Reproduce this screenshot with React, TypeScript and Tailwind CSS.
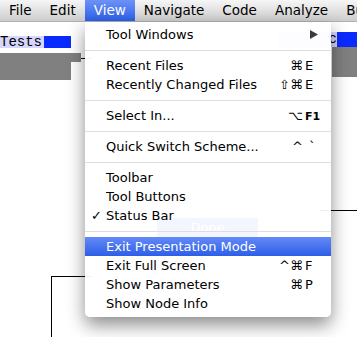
import type { ReactNode } from 'react';

const MENUBAR = ['File', 'Edit', 'View', 'Navigate', 'Code', 'Analyze', 'Build'];

type Item =
  | { kind: 'sep' }
  | {
      kind: 'item';
      label: string;
      mods?: ReactNode;
      keyChar?: ReactNode;
      submenu?: boolean;
      checked?: boolean;
      active?: boolean;
    };

const ITEMS: Item[] = [
  { kind: 'item', label: 'Tool Windows', submenu: true },
  { kind: 'sep' },
  { kind: 'item', label: 'Recent Files', mods: '⌘', keyChar: 'E' },
  { kind: 'item', label: 'Recently Changed Files', mods: '⇧⌘', keyChar: 'E' },
  { kind: 'sep' },
  {
    kind: 'item',
    label: 'Select In...',
    mods: '⌥',
    keyChar: <span className="text-[11px] font-bold">F1</span>,
  },
  { kind: 'sep' },
  { kind: 'item', label: 'Quick Switch Scheme...', mods: '^', keyChar: <span className="pl-[4px]">`</span> },
  { kind: 'sep' },
  { kind: 'item', label: 'Toolbar' },
  { kind: 'item', label: 'Tool Buttons' },
  { kind: 'item', label: 'Status Bar', checked: true },
  { kind: 'sep' },
  { kind: 'item', label: 'Exit Presentation Mode', active: true },
  { kind: 'item', label: 'Exit Full Screen', mods: '^⌘', keyChar: 'F' },
  { kind: 'item', label: 'Show Parameters', mods: '⌘', keyChar: 'P' },
  { kind: 'item', label: 'Show Node Info' },
];

function MenuBar() {
  return (
    <header className="flex h-[22px] shrink-0 items-stretch overflow-hidden whitespace-nowrap border-b border-[#b0b0b0] bg-gradient-to-b from-[#f6f6f6] to-[#cdcdcd] text-[13.5px] text-black">
      {MENUBAR.map((name) => (
        <span
          key={name}
          className={
            name === 'View'
              ? 'flex items-center bg-gradient-to-b from-[#6d92f7] to-[#2c5fe9] px-[9px] text-white'
              : 'flex items-center px-[9px]'
          }
        >
          {name}
        </span>
      ))}
    </header>
  );
}

/** The diagram nodes and wires sitting on the canvas behind the menu. */
function Canvas() {
  return (
    <div className="relative flex-1 bg-white">
      {/* left node */}
      <div className="absolute left-0 top-[14px] flex h-[12px] font-['Liberation_Mono',monospace] text-[14px] leading-[12px] text-black">
        <span className="w-[44px] bg-[#d6d6ff]">Tests</span>
        <span className="w-[27px] bg-[#0a2bff]" />
      </div>
      <div className="absolute left-0 top-[31px] h-[27px] w-[71px] bg-[#808080]" />
      <div className="absolute left-[71px] top-[31px] h-[9px] w-[10px] bg-[#808080]" />
      <div className="absolute left-[81px] top-[36px] h-px w-[10px] bg-black" />

      {/* right node, mostly under the menu */}
      <div className="absolute left-[278px] top-[10px] flex h-[15px] font-['Liberation_Mono',monospace] text-[14px] leading-[15px] text-black">
        <span className="w-[59px] bg-[#d6d6ff] text-right">c</span>
        <span className="w-[20px] bg-[#0a2bff]" />
      </div>
      <div className="absolute left-[332px] top-[25px] h-[30px] w-[25px] bg-[#808080]" />
      <div className="absolute left-[320px] top-[188px] h-px w-[37px] bg-black" />

      {/* dialog button seen through the menu */}
      <div className="absolute left-[157px] top-[196px] flex h-[19px] w-[101px] items-center justify-center bg-[#3b66f0] text-[13px] text-white">
        Done
      </div>

      {/* wire bottom left */}
      <div className="absolute left-[51px] top-[254px] h-px w-[40px] bg-black" />
      <div className="absolute left-[51px] top-[254px] h-[70px] w-px bg-black" />
    </div>
  );
}

function ViewMenu() {
  return (
    <div className="absolute left-[85px] top-[22px] w-[246px] rounded-b-[5px] bg-white/[0.94] pt-[3px] pb-[4px] text-[13px] text-black shadow-[0_8px_18px_rgba(0,0,0,0.45)]">
      {ITEMS.map((it, i) =>
        it.kind === 'sep' ? (
          <div key={i} className="flex h-[12px] items-center">
            <div className="h-px w-full bg-[#dedede]" />
          </div>
        ) : (
          <div
            key={i}
            className={
              it.active
                ? 'flex h-[19px] items-center whitespace-nowrap bg-gradient-to-b from-[#6489f6] to-[#2d5ee8] leading-[19px] text-white'
                : 'flex h-[19px] items-center whitespace-nowrap leading-[19px]'
            }
          >
            <span className="w-[21px] pl-[6px] text-[13px]">{it.checked ? '✓' : ''}</span>
            <span className="flex-1">{it.label}</span>
            {it.submenu ? (
              <svg width="8" height="9" viewBox="0 0 8 9" className="mr-[13px]">
                <path d="M0 0 L8 4.5 L0 9 Z" fill="#3a3a3a" />
              </svg>
            ) : it.mods ? (
              <>
                <span className="text-right">{it.mods}</span>
                <span className="w-[28px] pl-[2px]">{it.keyChar}</span>
              </>
            ) : null}
          </div>
        )
      )}
    </div>
  );
}

export default function App() {
  return (
    <div className="relative flex h-[337px] w-[357px] flex-col overflow-hidden bg-white font-['DejaVu_Sans',sans-serif]">
      <MenuBar />
      <Canvas />
      <ViewMenu />
    </div>
  );
}
